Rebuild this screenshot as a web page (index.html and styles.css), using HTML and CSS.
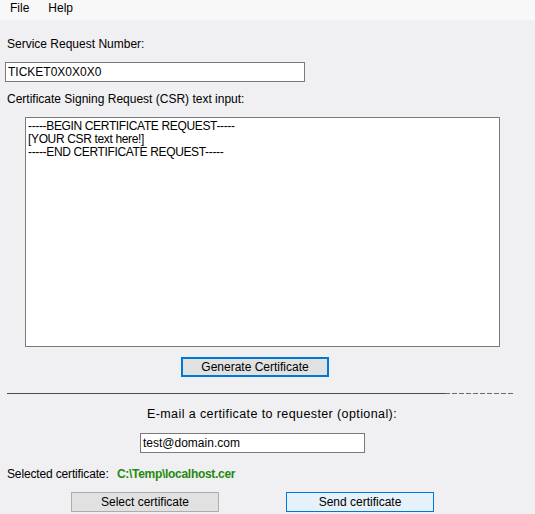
FILE: index.html
```html
<!DOCTYPE html>
<html>
<head>
<meta charset="utf-8">
<link rel="stylesheet" href="styles.css">
</head>
<body>
<div class="menubar">
  <span class="menu-item">File</span>
  <span class="menu-item">Help</span>
</div>
<div class="form">
  <div class="label label-srn">Service Request Number:</div>
  <div class="textbox textbox-srn">TICKET0X0X0X0</div>
  <div class="label label-csr">Certificate Signing Request (CSR) text input:</div>
  <div class="csr-box">-----BEGIN CERTIFICATE REQUEST-----
[YOUR CSR text here!]
-----END CERTIFICATE REQUEST-----</div>
  <div class="btn-row btn-row-generate">
    <button class="btn btn-focused">Generate Certificate</button>
  </div>
  <div class="separator">
    <div class="sep-solid"></div>
    <div class="sep-dashed"></div>
  </div>
  <div class="label label-email">E-mail a certificate to requester (optional):</div>
  <div class="textbox textbox-email">test@domain.com</div>
  <div class="selected-row">
    <span class="selected-label">Selected certificate:</span>
    <span class="selected-path">C:\Temp\localhost.cer</span>
  </div>
  <div class="bottom-buttons">
    <button class="btn btn-select">Select certificate</button>
    <button class="btn btn-send">Send certificate</button>
  </div>
</div>
</body>
</html>
```
FILE: styles.css
```css
html, body {
  margin: 0;
  padding: 0;
}
body {
  width: 535px;
  height: 514px;
  overflow: hidden;
  background: #f0eff1;
  font-family: "Liberation Sans", Arial, sans-serif;
  font-size: 12px;
  color: #000;
}
.menubar {
  box-sizing: border-box;
  height: 20px;
  background: #f8f8f9;
  display: flex;
  align-items: flex-start;
  padding: 1px 0 0 10px;
  gap: 19px;
  font-size: 12px;
  line-height: 14px;
}
.form {
  display: flex;
  flex-direction: column;
}
.label {
  line-height: 14px;
  height: 14px;
  white-space: nowrap;
}
.label-srn {
  margin: 17px 0 0 7px;
}
.textbox {
  box-sizing: border-box;
  height: 20px;
  background: #fff;
  border: 1px solid #7a7a7a;
  line-height: 18px;
  padding-left: 2px;
  white-space: nowrap;
}
.textbox-srn {
  margin: 11px 0 0 5px;
  width: 300px;
}
.label-csr {
  margin: 10px 0 0 7px;
}
.csr-box {
  box-sizing: border-box;
  margin: 11px 0 0 25px;
  width: 475px;
  height: 230px;
  background: #fff;
  border: 1px solid #7a7a7a;
  white-space: pre;
  line-height: 13px;
  padding: 2px 0 0 2px;
  letter-spacing: -0.35px;
}
.btn-row-generate {
  margin: 10px 0 0 181px;
  display: flex;
}
.btn {
  box-sizing: border-box;
  height: 20px;
  width: 148px;
  font-family: "Liberation Sans", Arial, sans-serif;
  font-size: 12px;
  color: #000;
  padding: 0;
  margin: 0;
  line-height: 16px;
  background: #e1e1e1;
  border: 1px solid #adadad;
  border-radius: 0;
}
.btn-focused {
  border: 2px solid #0078d7;
}
.separator {
  margin: 16px 0 0 7px;
  display: flex;
  height: 1px;
  width: 508px;
}
.sep-solid {
  width: 438px;
  height: 1px;
  background: #4a4a4a;
}
.sep-dashed {
  flex: 1;
  height: 1px;
  background: repeating-linear-gradient(90deg, #6b6b6b 0 5px, transparent 5px 7px);
}
.label-email {
  margin: 12px 0 0 147px;
  font-size: 12.5px;
  letter-spacing: 0.4px;
  line-height: 16px;
  height: 16px;
}
.textbox-email {
  margin: 11px 0 0 140px;
  width: 225px;
}
.selected-row {
  margin: 14px 0 0 7px;
  display: flex;
  line-height: 14px;
  height: 14px;
}
.selected-label {
  width: 110px;
  letter-spacing: -0.15px;
}
.selected-path {
  color: #1f8a12;
  font-weight: bold;
  letter-spacing: -0.3px;
}
.bottom-buttons {
  margin: 11px 0 0 71px;
  display: flex;
  gap: 67px;
}
.btn-select {
  background: #e1e1e1;
  border: 1px solid #adadad;
}
.btn-send {
  background: #e5f1fb;
  border: 1px solid #0078d7;
}
```
